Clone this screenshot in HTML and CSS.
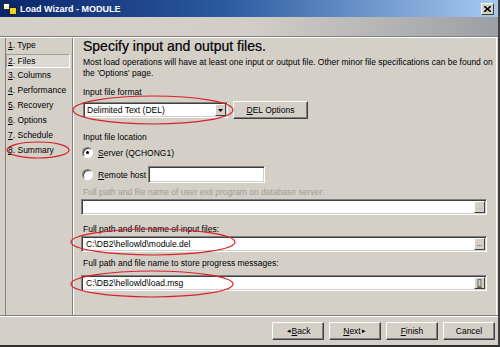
FILE: index.html
```html
<!DOCTYPE html>
<html lang="en">
<head>
    <meta charset="UTF-8">
    <title>Load Wizard - MODULE</title>
    <link rel="stylesheet" href="styles.css">
</head>
<body>
<div class="window">

    <!-- Title bar -->
    <div class="titlebar">
        <svg class="appIcon" width="14" height="12" viewBox="0 0 14 12">
            <rect x="0.5" y="0.5" width="6" height="6" fill="#f4f0c0" stroke="#303030"/>
            <rect x="6.5" y="4.5" width="7" height="7" fill="#f0d020" stroke="#202020"/>
            <rect x="1" y="1" width="5" height="2" fill="#ffffff"/>
        </svg>
        <span class="title">Load Wizard - MODULE</span>
        <span class="closeBtn">
            <svg width="7" height="6" viewBox="0 0 7 6"><path d="M0 0 L7 6 M7 0 L0 6" stroke="#000" stroke-width="1.6"/></svg>
        </span>
    </div>

    <div class="banner"></div>

    <div class="main">
        <!-- Wizard steps -->
        <ul class="steps">
            <li><u>1</u>. Type</li>
            <li class="current"><u>2</u>. Files</li>
            <li><u>3</u>. Columns</li>
            <li><u>4</u>. Performance</li>
            <li><u>5</u>. Recovery</li>
            <li><u>6</u>. Options</li>
            <li><u>7</u>. Schedule</li>
            <li><u>8</u>. Summary</li>
        </ul>

        <!-- Page content -->
        <div class="page">
            <h1>Specify input and output files.</h1>
            <p class="intro">Most load operations will have at least one input or output file. Other minor file specifications can be found on the 'Options' page.</p>

            <div class="label lblFormat">Input file format</div>
            <div class="formatRow">
                <div class="combo">
                    <span class="comboText">Delimited Text (DEL)</span>
                    <span class="comboArrow"><svg width="5" height="3" viewBox="0 0 5 3"><path d="M0 0 H5 L2.5 3 Z" fill="#000"/></svg></span>
                </div>
                <div class="btn optBtn"><u>D</u>EL Options</div>
            </div>

            <div class="label lblLocation">Input file location</div>
            <div class="radioRow first">
                <span class="radio checked"></span>
                <span><u>S</u>erver (QCHONG1)</span>
            </div>
            <div class="radioRow second">
                <span class="radio"></span>
                <span><u>R</u>emote host</span>
                <span class="field hostField"></span>
            </div>

            <div class="label disabled lblExit">Full path and file name of user exit program on database server:</div>
            <div class="field pathField">
                <span class="fieldText"></span>
                <span class="browseBtn dim">...</span>
            </div>

            <div class="label lblInput">Full path and file name of input files:</div>
            <div class="field pathField">
                <span class="fieldText">C:\DB2\hellowld\module.del</span>
                <span class="browseBtn">...</span>
            </div>

            <div class="label lblMsg">Full path and file name to store progress messages:</div>
            <div class="field pathField">
                <span class="fieldText">C:\DB2\hellowld\load.msg</span>
                <span class="browseBtn">
                    <svg width="5" height="9" viewBox="0 0 5 9"><path d="M1 0.5 H4 V7.5 H1 Z M0 8.5 H5" stroke="#505050" stroke-width="0.8" fill="none"/></svg>
                </span>
            </div>
        </div>
    </div>

    <!-- Navigation buttons -->
    <div class="footer">
        <div class="btn navBtn"><span class="arrow">&#9666;</span><u>B</u>ack</div>
        <div class="btn navBtn"><u>N</u>ext<span class="arrow">&#9656;</span></div>
        <div class="btn navBtn"><u>F</u>inish</div>
        <div class="btn navBtn">Cancel</div>
    </div>

    <!-- Red annotation marks drawn over the screenshot -->
    <svg class="marks" width="500" height="347" viewBox="0 0 500 347">
        <ellipse cx="153" cy="110" rx="80" ry="14"/>
        <ellipse cx="38" cy="150" rx="31" ry="8"/>
        <ellipse cx="153" cy="242" rx="82" ry="13"/>
        <ellipse cx="152" cy="284" rx="81" ry="13"/>
    </svg>
</div>
</body>
</html>
```

FILE: styles.css
```css
/* Overall page */
body {
    margin: 0;
    padding: 0;
    background: #d4d0c8;
    font-family: 'Liberation Sans', Arial, sans-serif;
    font-size: 8.5px;
    color: #000;
}

.window {
    position: relative;
    width: 500px;
    height: 347px;
    box-sizing: border-box;
    background: #d4d0c8;
    border-right: 2px solid #404040;
    border-bottom: 2px solid #303030;
    display: flex;
    flex-direction: column;
    overflow: hidden;
}

/* Title bar */
.titlebar {
    height: 17px;
    flex: none;
    display: flex;
    align-items: center;
    padding: 0 4px 0 3px;
    background: linear-gradient(90deg, #0a246a 0%, #2c5aa0 45%, #a6caf0 100%);
}

.appIcon {
    margin-right: 3px;
}

.title {
    color: #fff;
    font-weight: bold;
    font-size: 9px;
    flex: 1;
}

.closeBtn {
    width: 11px;
    height: 10px;
    background: #d4d0c8;
    border: 1px solid;
    border-color: #fff #404040 #404040 #fff;
    display: flex;
    align-items: center;
    justify-content: center;
}

/* Gray header strip */
.banner {
    height: 19px;
    flex: none;
    background: linear-gradient(90deg, #d4d0c8 0%, #d2cec7 50%, #9c9fa5 100%);
    border-bottom: 1px solid #808080;
}

/* Body: steps + page */
.main {
    height: 279px;
    flex: none;
    display: flex;
    border-top: 1px solid #fff;
    border-bottom: 1px solid #808080;
    box-sizing: border-box;
}

.steps {
    list-style: none;
    margin: 0 0 0 5px;
    padding: 0;
    width: 66px;
    border-left: 1px solid #808080;
    border-right: 1px solid #808080;
    box-shadow: 1px 0 0 #fff;
}

.steps li {
    height: 15px;
    line-height: 15px;
    padding-left: 2px;
    box-sizing: border-box;
}

.steps li.current {
    margin: 0 2px 0 0;
    height: 14px;
    line-height: 12px;
    margin-top: 1px;
    border: 1px solid;
    border-color: #a09c94 #fff #fff #a09c94;
    background: #dcd9d2;
    padding-left: 1px;
}

.page {
    flex: 1;
    padding-left: 10px;
    border-right: 1px solid #fff;
    margin-right: 1px;
}

h1 {
    font-size: 14px;
    font-weight: normal;
    line-height: 16px;
    margin: 0;
    -webkit-text-stroke: 0.2px #000;
}

.intro {
    margin: 3px 0 0 0;
    line-height: 11px;
    width: 410px;
}

.label {
    line-height: 11px;
}

.label.disabled {
    color: #a09c94;
}

.lblFormat   { margin-top: 8px; }
.lblLocation { margin-top: 13px; }
.lblExit     { margin-top: 4px; }
.lblInput    { margin-top: 9px; }
.lblMsg      { margin-top: 6px; }

/* Combo + button */
.formatRow {
    display: flex;
    align-items: flex-start;
    gap: 5px;
    margin-top: 3px;
}

.combo {
    width: 145px;
    height: 16px;
    box-sizing: border-box;
    background: #fff;
    border: 1px solid;
    border-color: #808080 #fff #fff #808080;
    box-shadow: inset 1px 1px 0 #404040, inset -1px -1px 0 #d4d0c8;
    display: flex;
    align-items: center;
    padding: 1px;
    margin-top: 1px;
}

.comboText {
    flex: 1;
    padding-left: 2px;
}

.comboArrow {
    width: 11px;
    height: 12px;
    box-sizing: border-box;
    background: #d4d0c8;
    border: 1px solid;
    border-color: #fff #404040 #404040 #fff;
    display: flex;
    align-items: center;
    justify-content: center;
}

.btn {
    background: #d4d0c8;
    border: 1px solid;
    border-color: #fff #404040 #404040 #fff;
    box-shadow: inset -1px -1px 0 #808080;
    box-sizing: border-box;
    display: flex;
    align-items: center;
    justify-content: center;
}

.optBtn {
    width: 75px;
    height: 18px;
}

/* Radio buttons */
.radioRow {
    display: flex;
    align-items: center;
}

.radioRow.first {
    height: 15px;
    margin-top: 2px;
}

.radioRow.second {
    height: 17px;
    margin-top: 6px;
}

.radio {
    width: 11px;
    height: 11px;
    box-sizing: border-box;
    border-radius: 50%;
    background: #fff;
    border: 1px solid;
    border-color: #808080 #fff #fff #808080;
    box-shadow: inset 1px 1px 0 #404040;
    margin: 0 5px 0 -1px;
    position: relative;
}

.radio.checked::after {
    content: "";
    position: absolute;
    width: 3px;
    height: 3px;
    border-radius: 50%;
    background: #000;
    left: 3px;
    top: 3px;
}

/* Text fields */
.field {
    display: flex;
    align-items: center;
    box-sizing: border-box;
    background: #fff;
    border: 1px solid;
    border-color: #808080 #fff #fff #808080;
    box-shadow: inset 1px 1px 0 #404040, inset -1px -1px 0 #d4d0c8;
}

.hostField {
    width: 117px;
    height: 17px;
    margin-left: 2px;
}

.pathField {
    width: 406px;
    height: 16px;
    margin-left: -2px;
    margin-top: 1px;
    padding: 1px;
}

.lblMsg + .pathField { margin-top: 6px; }

.fieldText {
    flex: 1;
    padding-left: 3px;
}

.browseBtn {
    width: 11px;
    height: 12px;
    box-sizing: border-box;
    background: #d4d0c8;
    border: 1px solid;
    border-color: #fff #404040 #404040 #fff;
    display: flex;
    align-items: center;
    justify-content: center;
    font-size: 7px;
    line-height: 8px;
}

.browseBtn.dim {
    color: #a09c94;
}

/* Footer buttons */
.footer {
    flex: 1;
    display: flex;
    justify-content: flex-end;
    align-items: flex-start;
    gap: 5px;
    padding: 5px 3px 0 0;
    border-top: 1px solid #fff;
}

.navBtn {
    width: 52px;
    height: 18px;
}

.arrow {
    font-size: 7px;
    margin: 0 1px;
}

/* Red annotation ellipses */
.marks {
    position: absolute;
    left: 0;
    top: 0;
    pointer-events: none;
}

.marks ellipse {
    fill: none;
    stroke: #d8202c;
    stroke-width: 1.2;
}
```
